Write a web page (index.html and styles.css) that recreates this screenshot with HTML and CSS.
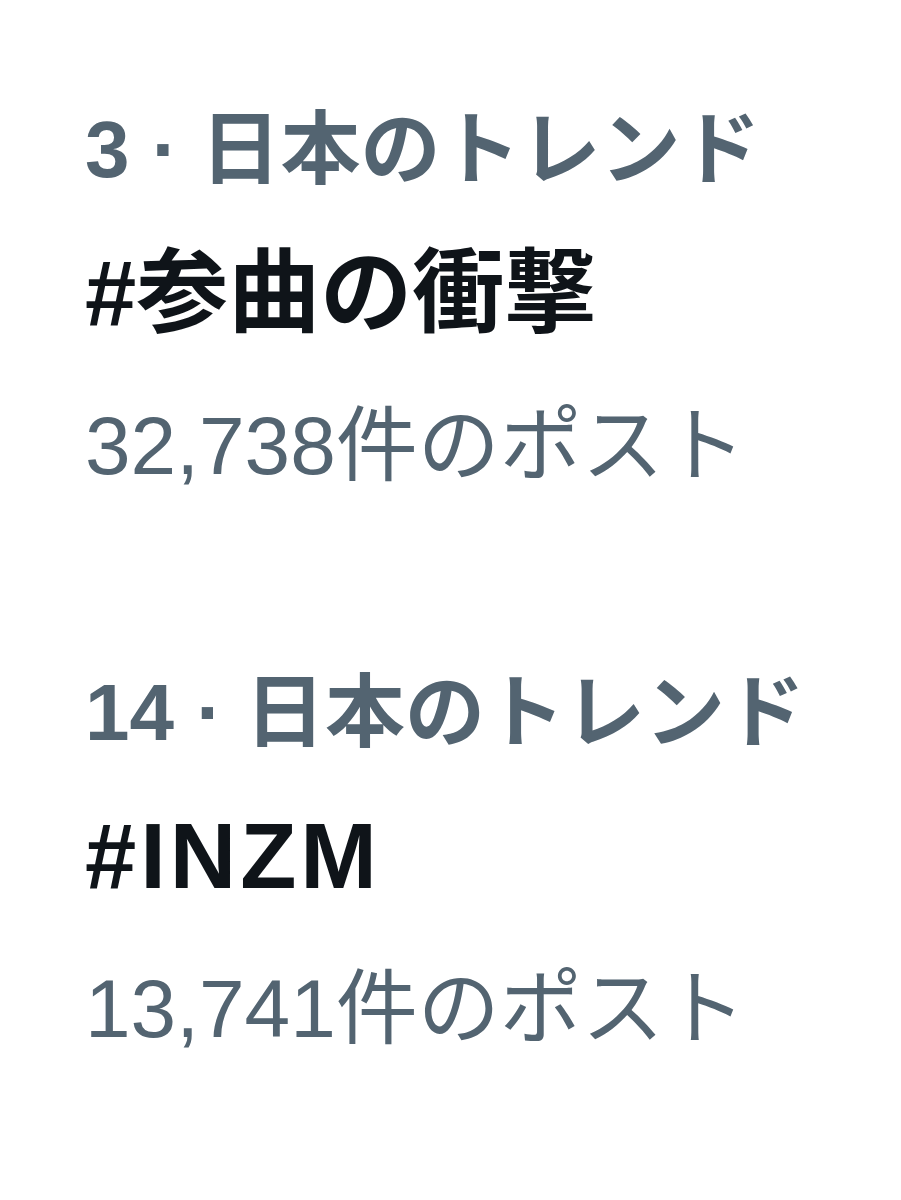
FILE: index.html
```
<!DOCTYPE html>
<html lang="ja">
<head>
<meta charset="utf-8">
<title>トレンド</title>
<link rel="stylesheet" href="styles.css">
</head>
<body>
<main class="trends">
  <section class="trend">
    <div class="meta meta-top">3 · 日本のトレンド</div>
    <div class="title">#参曲の衝撃</div>
    <div class="meta count">32,738件のポスト</div>
  </section>
  <section class="trend">
    <div class="meta meta-top">14 · 日本のトレンド</div>
    <div class="title title-latin">#INZM</div>
    <div class="meta count">13,741件のポスト</div>
  </section>
</main>
</body>
</html>
```
FILE: styles.css
```
html, body {
  margin: 0;
  padding: 0;
  background: #ffffff;
}

body {
  font-family: "Liberation Sans", "Noto Sans CJK JP", sans-serif;
  width: 901px;
  height: 1200px;
  overflow: hidden;
}

.trends {
  display: flex;
  flex-direction: column;
  gap: 117px;
  padding: 80px 0 0 85px;
}

.trend {
  display: flex;
  flex-direction: column;
}

.meta {
  color: #536471;
  font-size: 80px;
  white-space: nowrap;
}

.meta-top {
  font-weight: 700;
  line-height: 140px;
}

.title {
  color: #0f1419;
  font-size: 92px;
  font-weight: 700;
  line-height: 146px;
  white-space: nowrap;
}

.title-latin {
  letter-spacing: 4px;
}

.count {
  font-size: 82px;
  font-weight: 400;
  line-height: 160px;
}
```
